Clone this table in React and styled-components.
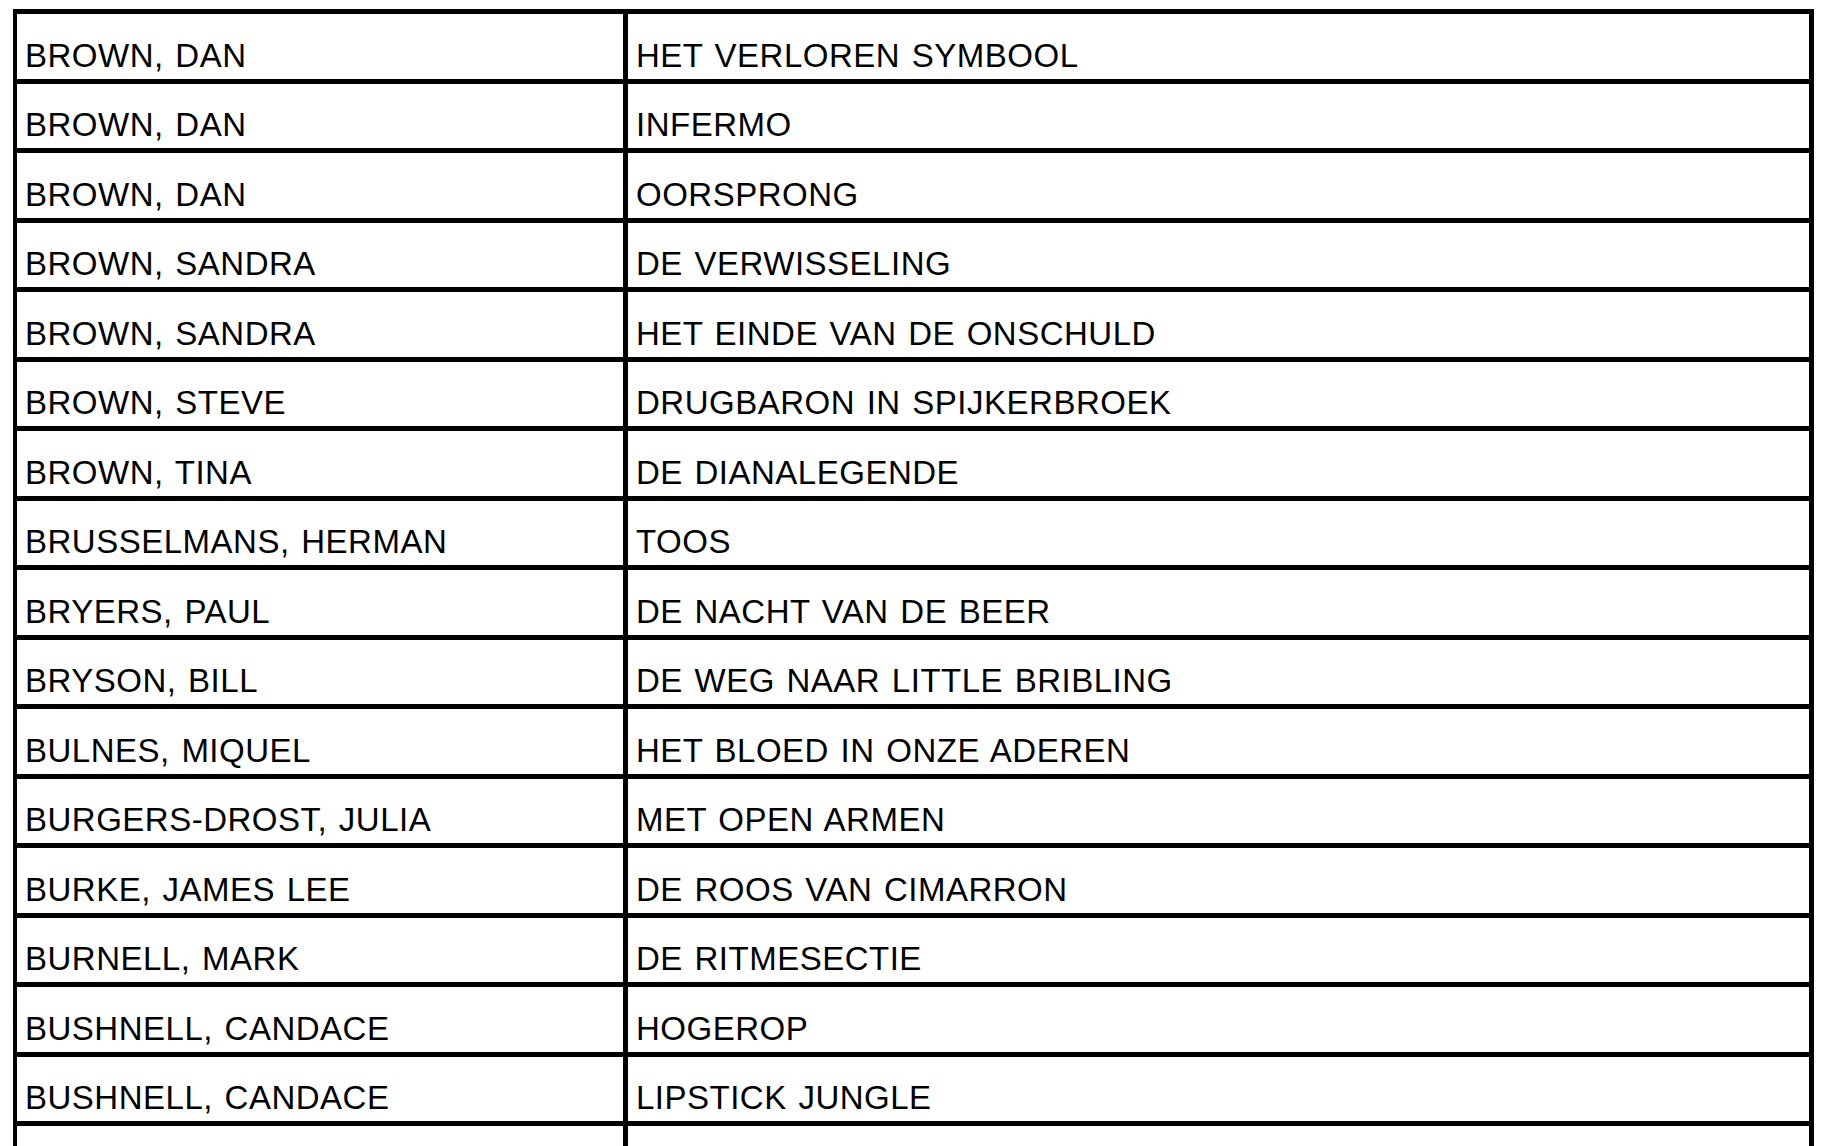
import styled, { createGlobalStyle } from "styled-components";

const GlobalStyle = createGlobalStyle`
  html, body {
    margin: 0;
    padding: 0;
    background: #fff;
    overflow: hidden;
  }
  body {
    font-family: "Liberation Sans", Arial, sans-serif;
    color: #000;
  }
`;

const rows = [
  ["BROWN, DAN", "HET VERLOREN SYMBOOL"],
  ["BROWN, DAN", "INFERMO"],
  ["BROWN, DAN", "OORSPRONG"],
  ["BROWN, SANDRA", "DE VERWISSELING"],
  ["BROWN, SANDRA", "HET EINDE VAN DE ONSCHULD"],
  ["BROWN, STEVE", "DRUGBARON IN SPIJKERBROEK"],
  ["BROWN, TINA", "DE DIANALEGENDE"],
  ["BRUSSELMANS, HERMAN", "TOOS"],
  ["BRYERS, PAUL", "DE NACHT VAN DE BEER"],
  ["BRYSON, BILL", "DE WEG NAAR LITTLE BRIBLING"],
  ["BULNES, MIQUEL", "HET BLOED IN ONZE ADEREN"],
  ["BURGERS-DROST, JULIA", "MET OPEN ARMEN"],
  ["BURKE, JAMES LEE", "DE ROOS VAN CIMARRON"],
  ["BURNELL, MARK", "DE RITMESECTIE"],
  ["BUSHNELL, CANDACE", "HOGEROP"],
  ["BUSHNELL, CANDACE", "LIPSTICK JUNGLE"],
  ["", ""],
];

const Sheet = styled.div`
  margin: 9px 0 0 13px;
  width: 1801px;
  box-sizing: border-box;
  border-top: 5px solid #000;
  border-left: 4px solid #000;
  border-right: 5px solid #000;
`;

const Row = styled.div`
  display: grid;
  grid-template-columns: 611px 1fr;
  height: 69.5px;
  box-sizing: border-box;
  border-bottom: 5px solid #000;
`;

const Cell = styled.div`
  display: flex;
  align-items: flex-end;
  padding: 0 0 7px 8px;
  box-sizing: border-box;
  font-size: 33px;
  letter-spacing: 0.5px;
  word-spacing: 2px;
  line-height: 1;
  white-space: nowrap;
  border-right: ${({ $divider }) => ($divider ? "5px solid #000" : "none")};
`;

export default function App() {
  return (
    <>
      <GlobalStyle />
      <Sheet>
        {rows.map(([author, title], i) => (
          <Row key={i}>
            <Cell $divider>{author}</Cell>
            <Cell>{title}</Cell>
          </Row>
        ))}
      </Sheet>
    </>
  );
}
